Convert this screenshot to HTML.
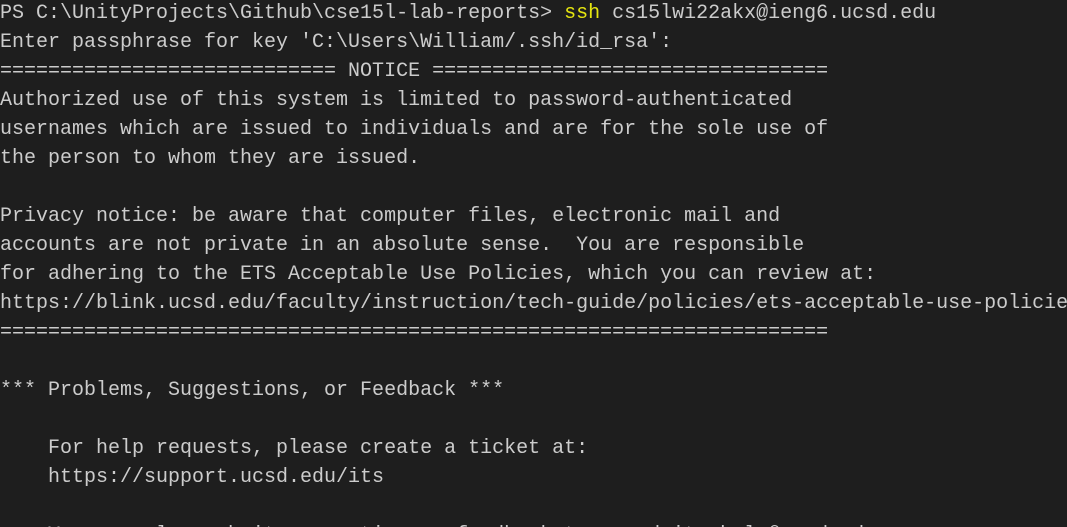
<!DOCTYPE html>
<html><head><style>
html,body{margin:0;padding:0;background:#1e1e1e;width:1067px;height:527px;overflow:hidden;position:relative}
.w{position:absolute;left:0;top:0;width:1067px;height:527px;overflow:hidden}
pre{margin:0;position:absolute;top:-1px;left:0;font-family:"Liberation Mono",monospace;font-size:20px;line-height:29px;color:#cccccc;white-space:pre}
.y{color:#e5e510}
</style></head><body><div class="w">
<pre>PS C:\UnityProjects\Github\cse15l-lab-reports&gt; <span class="y">ssh</span> cs15lwi22akx@ieng6.ucsd.edu
Enter passphrase for key 'C:\Users\William/.ssh/id_rsa':
============================ NOTICE =================================
Authorized use of this system is limited to password-authenticated
usernames which are issued to individuals and are for the sole use of
the person to whom they are issued.

Privacy notice: be aware that computer files, electronic mail and
accounts are not private in an absolute sense.  You are responsible
for adhering to the ETS Acceptable Use Policies, which you can review at:
https://blink.ucsd.edu/faculty/instruction/tech-guide/policies/ets-acceptable-use-policie
=====================================================================

*** Problems, Suggestions, or Feedback ***

    For help requests, please create a ticket at:
    https://support.ucsd.edu/its

    You can also submit a question or feedback to: ucsd-its-help@ucsd.edu
</pre>
</div></body></html>
